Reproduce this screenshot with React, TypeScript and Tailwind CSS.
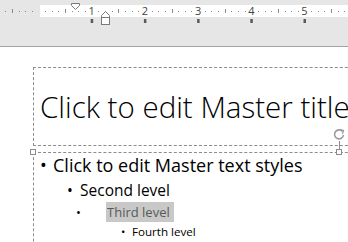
const PX_PER_EIGHTH = 6.65;
const ZERO = 38.5;

function Ruler() {
  const marks = [];
  for (let k = -5; k <= 46; k++) {
    const x = ZERO + k * PX_PER_EIGHTH;
    if (k === 0) continue;
    if (k % 8 === 0) {
      marks.push(
        <text key={k} x={x} y={15} textAnchor="middle" fontSize="11" fill="#444" fontFamily="'Open Sans', sans-serif">
          {k / 8}
        </text>,
      );
      marks.push(<rect key={'t' + k} x={x - 1} y={19} width={2.5} height={4} fill="#5a5a5a" />);
    } else if (k % 4 === 0) {
      marks.push(<rect key={k} x={Math.round(x)} y={9} width={1} height={4} fill="#8a8a8a" />);
    } else {
      marks.push(<rect key={k} x={Math.round(x)} y={11} width={1} height={1} fill="#8a8a8a" />);
    }
  }
  return (
    <svg width="348" height="46" className="block">
      <rect x="40" y="5" width="308" height="12" fill="#ffffff" />
      {marks}
      {/* first line indent */}
      <path d="M71.5 3.5 H79.5 V5.5 L75.5 9.5 L71.5 5.5 Z" fill="#ffffff" stroke="#7a7a7a" />
      {/* hanging indent */}
      <path d="M101.5 17.5 V15.5 L105.5 11.5 L109.5 15.5 V17.5 Z" fill="#ffffff" stroke="#7a7a7a" />
      <rect x="101.5" y="17.5" width="8" height="7" fill="#ffffff" stroke="#7a7a7a" />
    </svg>
  );
}

function Handle({ className }: { className: string }) {
  return <div className={`absolute w-[6px] h-[6px] border border-[#8c8c8c] bg-white ${className}`} />;
}

export default function App() {
  return (
    <div className="w-[348px] h-[242px] overflow-hidden bg-white relative" style={{ fontFamily: "'Open Sans', sans-serif" }}>
      <div className="h-[47px] bg-[#e6e6e6] border-b border-[#a3a3a3]">
        <Ruler />
      </div>

      <div className="ml-[33px] mt-[20px] w-[340px] h-[79px] border border-dashed border-[#8c8c8c] flex items-center pl-[6px]">
        <span className="text-[29.5px] font-light text-black whitespace-nowrap leading-none">Click to edit Master title</span>
      </div>

      <div className="relative ml-[33px] mt-[6px] w-[340px] h-[120px] border border-dashed border-[#8c8c8c]">
        <Handle className="-left-[4px] -top-[4px]" />
        <Handle className="left-[302px] -top-[4px]" />
        <div className="absolute left-[305px] -top-[12px] w-px h-[8px] bg-[#8c8c8c]" />
        <svg className="absolute left-[299px] -top-[25px]" width="12" height="13" viewBox="0 0 12 13">
          <path d="M9.5 3.5 A4.5 4.5 0 1 0 10.5 7" fill="none" stroke="#9a9a9a" strokeWidth="1.6" />
          <path d="M7 1.5 L10.5 2.5 L9.5 6" fill="none" stroke="#9a9a9a" strokeWidth="1.2" />
        </svg>

        <div className="flex flex-col text-black">
          <div className="flex items-center h-[24px] text-[18px] leading-none">
            <span className="w-[19px] pl-[6px]">•</span>
            <span className="whitespace-nowrap">Click to edit Master text styles</span>
          </div>
          <div className="flex items-center h-[20px] mt-[4px] text-[15.5px] leading-none">
            <span className="w-[46px] pl-[33px]">•</span>
            <span className="whitespace-nowrap">Second level</span>
          </div>
          <div className="flex items-center h-[20px] mt-[1px] text-[13px] leading-none">
            <span className="w-[72px] pl-[42px]">•</span>
            <span className="whitespace-nowrap h-[20px] pl-[1px] pr-[4px] flex items-center bg-[#c8c8c8] text-[#595959]">Third level</span>
          </div>
          <div className="flex items-center h-[16px] mt-[2px] text-[11.6px] leading-none">
            <span className="w-[98px] pl-[87px]">•</span>
            <span className="whitespace-nowrap">Fourth level</span>
          </div>
        </div>
      </div>
    </div>
  );
}
